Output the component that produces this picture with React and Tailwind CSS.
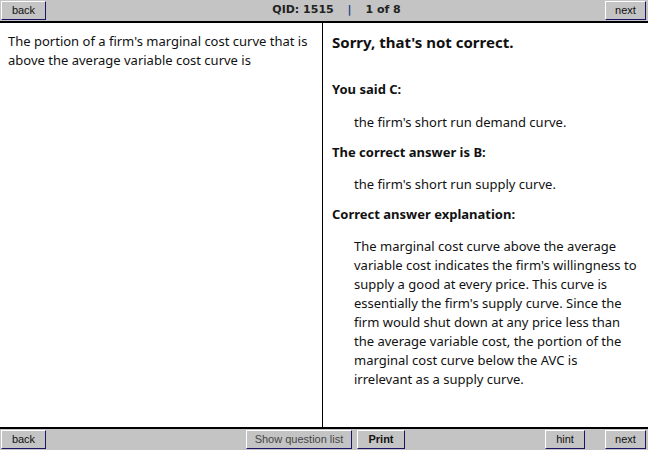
import React from 'react'

const Btn = ({ children, className = '' }) => (
  <button
    className={`h-[19px] bg-[#c4c4c4] border border-t-white border-l-white border-r-[#1b1464] border-b-[#1b1464] text-[11px] text-[#111] leading-none ${className}`}
    style={{ fontFamily: '"Liberation Sans", Arial, sans-serif' }}
  >
    {children}
  </button>
)

const App = () => {
  return (
    <div className="w-[648px] h-[450px] flex flex-col bg-white overflow-hidden" style={{ fontFamily: '"Noto Sans", "Open Sans", sans-serif' }}>
      <div className="h-[23px] shrink-0 bg-[#c4c4c4] border-b-2 border-black flex items-center px-[1px] relative">
        <Btn className="w-[45px]">back</Btn>
        <div className="flex-1 text-center text-[11px] font-bold text-[#222] pl-[22px]" style={{ fontFamily: 'Verdana, "DejaVu Sans", sans-serif' }}>
          QID: 1515 <span className="mx-[10px] text-[#1b3a8a]">|</span> 1 of 8
        </div>
        <Btn className="w-[41px] mr-[1px]">next</Btn>
      </div>

      <div className="flex-1 flex min-h-0">
        <div className="w-[323px] border-r border-black px-[8px] pt-[9px] text-[13px] leading-[19px] text-[#111]">
          The portion of a firm's marginal cost curve that is above the average variable cost curve is
        </div>
        <div className="flex-1 pl-[9px] pr-[8px] pt-[8px] text-[13px] text-[#111]">
          <div className="text-[15px] font-bold leading-[22px]">Sorry, that's not correct.</div>
          <div className="font-bold mt-[27px] leading-[19px]">You said C:</div>
          <div className="pl-[22px] mt-[14px] leading-[19px]">the firm's short run demand curve.</div>
          <div className="font-bold mt-[11px] leading-[19px]">The correct answer is B:</div>
          <div className="pl-[22px] mt-[13px] leading-[19px]">the firm's short run supply curve.</div>
          <div className="font-bold mt-[11px] leading-[19px]">Correct answer explanation:</div>
          <div className="pl-[22px] mt-[13px] leading-[19px] w-[305px]">
            The marginal cost curve above the average variable cost indicates the firm's willingness to supply a good at every price. This curve is essentially the firm's supply curve. Since the firm would shut down at any price less than the average variable cost, the portion of the marginal cost curve below the AVC is irrelevant as a supply curve.
          </div>
        </div>
      </div>

      <div className="h-[23px] shrink-0 bg-[#c4c4c4] border-t-2 border-black flex items-center px-[1px]">
        <Btn className="w-[45px]">back</Btn>
        <div className="flex-1 flex justify-center gap-[5px] pl-[60px]">
          <Btn className="w-[106px] text-[#444]">Show question list</Btn>
          <Btn className="w-[48px] font-bold">Print</Btn>
        </div>
        <Btn className="w-[40px]">hint</Btn>
        <Btn className="w-[41px] ml-[20px] mr-[1px]">next</Btn>
      </div>
    </div>
  )
}

export default App
